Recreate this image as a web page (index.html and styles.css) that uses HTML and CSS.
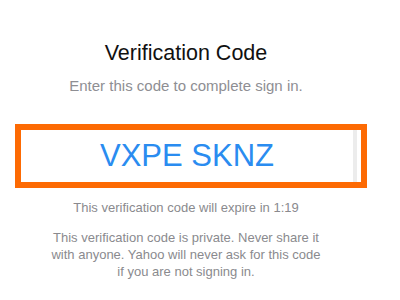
FILE: index.html
```html
<!DOCTYPE html>
<html>
<head>
<meta charset="utf-8">
<link rel="stylesheet" href="styles.css">
</head>
<body>
<main class="page">
  <h1 class="title">Verification Code</h1>
  <p class="subtitle">Enter this code to complete sign in.</p>
  <div class="highlight">
    <div class="card">
      <span class="code">VXPE SKNZ</span>
    </div>
  </div>
  <p class="expire">This verification code will expire in 1:19</p>
  <p class="notice">This verification code is private. Never share it<br>with anyone. Yahoo will never ask for this code<br>if you are not signing in.</p>
</main>
</body>
</html>
```
FILE: styles.css
```css
html, body {
  margin: 0;
  padding: 0;
  background: #ffffff;
}
.page {
  width: 372px;
  padding-top: 41px;
  font-family: "Liberation Sans", Arial, sans-serif;
  text-align: center;
}
.title {
  margin: 0;
  font-size: 21.5px;
  line-height: 24px;
  font-weight: normal;
  color: #111111;
}
.subtitle {
  margin: 12px 0 0;
  font-size: 15px;
  line-height: 18px;
  color: #8e8e93;
}
.highlight {
  margin: 29px 0 0 15px;
  width: 340px;
  height: 52px;
  border: 6px solid #fd6a03;
  display: flex;
}
.card {
  flex: 1;
  margin-right: 4px;
  border-right: 4px solid #ececec;
  display: flex;
  align-items: center;
  justify-content: center;
}
.code {
  font-size: 31px;
  line-height: 34px;
  color: #2a8cf0;
}
.expire {
  margin: 12px 0 0;
  font-size: 13px;
  line-height: 15px;
  color: #8a8a8e;
}
.notice {
  margin: 14px 0 0;
  font-size: 13px;
  line-height: 17px;
  color: #8a8a8e;
}
```
